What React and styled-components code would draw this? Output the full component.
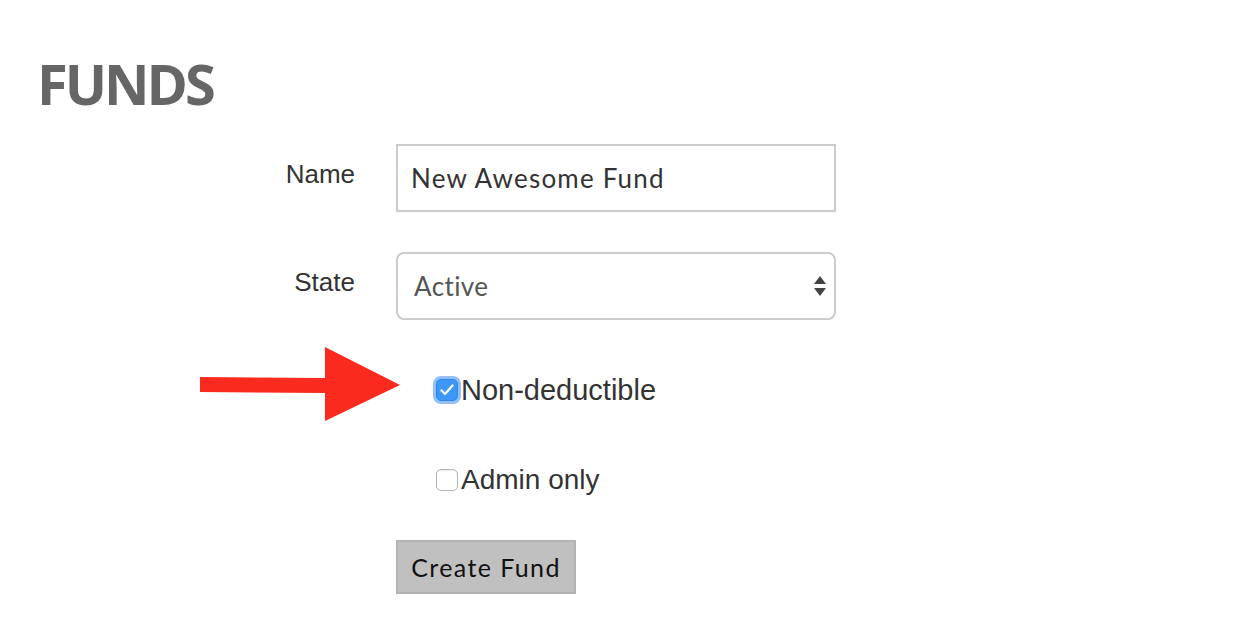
import React, { useState } from "react";
import styled, { createGlobalStyle } from "styled-components";

const Global = createGlobalStyle`
  html, body {
    margin: 0;
    padding: 0;
    background: #fff;
  }
  body {
    font-family: "Liberation Sans", Arial, sans-serif;
    color: #333;
  }
`;

const Page = styled.div`
  width: 1246px;
  height: 642px;
  padding-top: 50px;
  box-sizing: border-box;
  overflow: hidden;
`;

const Title = styled.h1`
  margin: 0 0 0 37px;
  font-family: "Open Sans", sans-serif;
  font-weight: 700;
  font-size: 56px;
  line-height: 66px;
  letter-spacing: -3px;
  color: #666;
`;

const Form = styled.form`
  display: flex;
  flex-direction: column;
  margin-top: 28px;
`;

const Row = styled.div`
  display: grid;
  grid-template-columns: 355px 440px;
  column-gap: 41px;
  align-items: center;
  margin-top: ${(p) => p.$top || 0}px;
  position: relative;
`;

const Label = styled.label`
  text-align: right;
  font-size: 26px;
  color: #333;
  padding-bottom: 7px;
`;

const TextInput = styled.input`
  box-sizing: border-box;
  width: 440px;
  height: 68px;
  border: 2px solid #ccc;
  padding: 0 13px;
  font-family: "Lato", sans-serif;
  font-size: 26px;
  letter-spacing: 1.2px;
  color: #333;
  outline: none;
`;

const SelectWrap = styled.div`
  position: relative;
  width: 440px;
`;

const Select = styled.select`
  box-sizing: border-box;
  width: 440px;
  height: 68px;
  border: 2px solid #ccc;
  border-radius: 8px;
  background: #fff;
  padding: 0 16px;
  font-family: "Lato", sans-serif;
  font-size: 26px;
  letter-spacing: 0.4px;
  color: #555;
  appearance: none;
  outline: none;
`;

const Arrows = styled.svg`
  position: absolute;
  right: 9px;
  top: 22px;
  pointer-events: none;
`;

const CheckLabel = styled.label`
  grid-column: 2;
  display: flex;
  align-items: center;
  margin-left: 40px;
  font-size: ${(p) => p.$size}px;
  color: #333;
  height: 50px;
  cursor: pointer;
`;

const Box = styled.span`
  box-sizing: border-box;
  width: 22px;
  height: 22px;
  margin-right: 3px;
  border-radius: 5px;
  display: flex;
  align-items: center;
  justify-content: center;
  background: ${(p) => (p.$checked ? "#3d97f7" : "#fff")};
  border: 1px solid ${(p) => (p.$checked ? "#2f86e8" : "#b5b5b5")};
  box-shadow: ${(p) =>
    p.$checked ? "0 0 0 3px rgba(110, 170, 245, 0.75)" : "inset 0 1px 1px rgba(0,0,0,0.08)"};
`;

const Hidden = styled.input`
  display: none;
`;

const Arrow = styled.svg`
  position: absolute;
  left: 200px;
  top: -18px;
`;

const Button = styled.button`
  grid-column: 2;
  justify-self: start;
  box-sizing: border-box;
  width: 180px;
  height: 54px;
  background: #c0c0c0;
  border: 2px solid #b3b3b3;
  font-family: "Lato", sans-serif;
  font-size: 25px;
  letter-spacing: 1.4px;
  color: #111;
  padding: 0;
`;

const Checkbox = ({ checked, onChange, size, children }) => (
  <CheckLabel $size={size}>
    <Hidden type="checkbox" checked={checked} onChange={onChange} />
    <Box $checked={checked}>
      {checked && (
        <svg width="16" height="14" viewBox="0 0 16 14">
          <path d="M2.5 7.5 L6 11 L13.5 2.5" fill="none" stroke="#fff" strokeWidth="2.2" strokeLinecap="round" strokeLinejoin="round" />
        </svg>
      )}
    </Box>
    {children}
  </CheckLabel>
);

export default function App() {
  const [name, setName] = useState("New Awesome Fund");
  const [state, setState] = useState("active");
  const [nonDeductible, setNonDeductible] = useState(true);
  const [adminOnly, setAdminOnly] = useState(false);

  return (
    <Page>
      <Global />
      <Title>FUNDS</Title>
      <Form onSubmit={(e) => e.preventDefault()}>
        <Row>
          <Label>Name</Label>
          <TextInput value={name} onChange={(e) => setName(e.target.value)} />
        </Row>
        <Row $top={40}>
          <Label>State</Label>
          <SelectWrap>
            <Select value={state} onChange={(e) => setState(e.target.value)}>
              <option value="active">Active</option>
              <option value="inactive">Inactive</option>
            </Select>
            <Arrows width="14" height="24" viewBox="0 0 14 24">
              <path d="M7 2 L13 10 L1 10 Z" fill="#444" />
              <path d="M1 14 L13 14 L7 22 Z" fill="#444" />
            </Arrows>
          </SelectWrap>
        </Row>
        <Row $top={45}>
          <Arrow width="202" height="76" viewBox="0 0 202 76">
            <path d="M0 30 L125 31 L125 0 L200 38 L125 74 L125 46 L0 45 Z" fill="#fb2a1f" />
          </Arrow>
          <Checkbox size={29} checked={nonDeductible} onChange={() => setNonDeductible(!nonDeductible)}>
            Non-deductible
          </Checkbox>
        </Row>
        <Row $top={40}>
          <Checkbox size={28} checked={adminOnly} onChange={() => setAdminOnly(!adminOnly)}>
            Admin only
          </Checkbox>
        </Row>
        <Row $top={35}>
          <Button type="submit">Create Fund</Button>
        </Row>
      </Form>
    </Page>
  );
}
